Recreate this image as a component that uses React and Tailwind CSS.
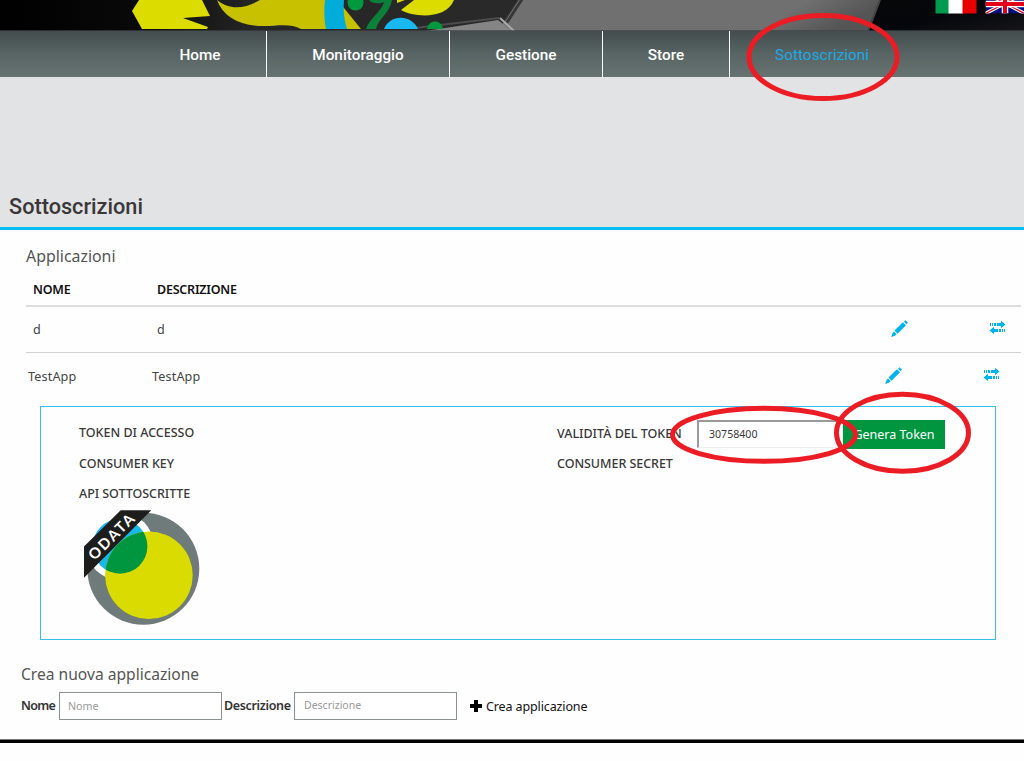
import React from "react";

const ubuntu = "font-['Noto_Sans',sans-serif]";

function Banner() {
  return (
    <svg className="block h-[31px] w-full" viewBox="0 0 1024 31" preserveAspectRatio="none">
      <defs>
        <linearGradient id="dark" x1="0" x2="1" y1="0" y2="0">
          <stop offset="0" stopColor="#000" />
          <stop offset="0.14" stopColor="#090909" />
          <stop offset="0.25" stopColor="#262626" />
          <stop offset="0.5" stopColor="#292929" />
        </linearGradient>
        <linearGradient id="night" x1="0" x2="1" y1="0" y2="1">
          <stop offset="0" stopColor="#080808" />
          <stop offset="0.5" stopColor="#03060b" />
          <stop offset="1" stopColor="#17161a" />
        </linearGradient>
        <linearGradient id="shade" x1="0" x2="1" y1="0" y2="0.15">
          <stop offset="0.8" stopColor="#707070" />
          <stop offset="1" stopColor="#555" />
        </linearGradient>
      </defs>
      <rect width="1024" height="31" fill="url(#dark)" />
      <polygon points="521,0 880,0 868,31 497,31" fill="url(#shade)" />
      <polygon points="425,31 498,20 512,31" fill="#858585" />
      <path d="M415 28 L499 18" stroke="#4c4c4c" strokeWidth="2" />
      <path d="M521 -1 L506 22" stroke="#373737" strokeWidth="5" />
      <path d="M520 -1 L505 22" stroke="#777" strokeWidth="1" />
      <path d="M500 18 L514 31" stroke="#aaa" strokeWidth="2" />
      <polygon points="880,0 1024,0 1024,31 868,31" fill="url(#night)" />
      <path d="M880 0 L868 31" stroke="#444" strokeWidth="2" />
      <path d="M139 0 L132 11 L142 29 H207 L208 27 L183 18 L210 16 L202 0Z" fill="#dddc00" />
      <path d="M217 0 C231 12 248 7 260 0 H336 L344 8 L361 29 H301 C291 23 277 26 264 26 C240 26 223 17 217 0Z" fill="#c7c100" />
      <path d="M325 0 H344 C343 10 344 20 347 29 H326 C324 18 324 8 325 0Z" fill="#00acd9" />
      <circle cx="355.500" cy="2.500" r="8" fill="#00983d" />
      <path d="M369 0 C372 4 380 4 384 2 C382 11 368 20 366 29 H376 C378 19 390 13 392 0Z" fill="#0a803a" />
      <path d="M384 29 C390 14 411 14 418 29Z" fill="#18b8f0" />
      <path d="M427 29 C428 19 442 19 443 29Z" fill="#00983d" />
      <path d="M397 0 V3 L405 0Z M414 0 L401 10 C415 18 447 19 454 0Z" fill="#dddc00" />
      <rect y="30" width="1024" height="1" fill="#404245" opacity="0.7" />
      <rect x="935.500" width="14" height="13.500" fill="#009a4e" />
      <rect x="948.500" width="14.500" height="13.500" fill="#fff" />
      <rect x="962.500" width="14" height="13.500" fill="#e80000" />
      <svg x="985.500" y="-7" width="39" height="20.500" viewBox="0 0 39 20.500">
        <rect width="39" height="20.500" fill="#00107a" />
        <path d="M0 0 L39 20.500 M0 20.500 L39 0" stroke="#fff" strokeWidth="3.500" />
        <path d="M0 0 L39 20.500 M0 20.500 L39 0" stroke="#e2001a" strokeWidth="1.200" />
        <path d="M0 11 H39 M19.500 0 V20.500" stroke="#fff" strokeWidth="6.500" />
        <path d="M0 11 H39 M19.500 0 V20.500" stroke="#e2001a" strokeWidth="4" />
      </svg>
    </svg>
  );
}

function Pencil() {
  return (
    <svg className="h-[17px] w-[17px]" viewBox="0 0 17 17" fill="#00b3ee">
      <path d="M13 1.800 L14.600 .3 L17 2.700 L15.400 4.200Z M11.900 2.200 L15 5.300 L6.600 13.700 L3.500 10.600Z M3 11.500 L5.600 14.200 L4 15.700 L.3 17 L1.500 13Z" />
    </svg>
  );
}

function Swap() {
  return (
    <svg className="h-[14px] w-[17px]" viewBox="0 0 17 14" fill="#00b3ee">
      <path d="M1 3h1v3H1z M3 3h1v3H3z M5 3h2v3H5z M8 3h4V.7l4.500 3.800-4.500 3.800V6H8z" />
      <path d="M.5 10.500l4.500-3.800V9h4v3H5v2z M10 9h2v3h-2z M13 9h1v3h-1z M15 9h1v3h-1z" />
    </svg>
  );
}

function ApiLogo() {
  return (
    <svg className="block h-[116px] w-[117px]" viewBox="84 510 117 116">
      <defs>
        <clipPath id="yellowClip">
          <circle cx="148.900" cy="575.300" r="43.800" />
        </clipPath>
      </defs>
      <circle cx="143.300" cy="568.700" r="56" fill="#6f7b7a" />
      <circle cx="120" cy="546.300" r="34" fill="#fff" />
      <circle cx="120" cy="546.300" r="27.400" fill="#1ab7ea" />
      <circle cx="148.900" cy="575.300" r="43.800" fill="#dadb00" />
      <circle cx="120" cy="546.300" r="27.400" fill="#00963f" clipPath="url(#yellowClip)" />
      <polygon points="84,546.500 120.700,510.300 151.300,510.300 84,577.700" fill="#1d1d1b" />
      <text
        transform="translate(115 540.600) rotate(-45)"
        textAnchor="middle"
        className="fill-white font-['Lato',sans-serif] text-[15px] font-bold"
        textLength="58"
      >
        ODATA
      </text>
    </svg>
  );
}

function NavItem({ className, children }) {
  return <li className={`flex items-center justify-center border-r border-white pt-[2px] ${className}`}>{children}</li>;
}

function Row({ children, pad, action, className }) {
  return (
    <div className={`flex text-[12.600px] text-[#444] ${className}`}>
      <span className={`w-[124px] shrink-0 box-content ${pad}`}>{children}</span>
      <span className="flex-1">{children}</span>
      <span className={`flex items-start ${action}`}>
        <Pencil />
        <span className="ml-[81px]">
          <Swap />
        </span>
      </span>
    </div>
  );
}

export default function App() {
  return (
    <div className={`relative h-[762px] w-[1024px] overflow-hidden bg-[#fefefe] ${ubuntu}`}>
      <Banner />
      <nav className="h-[46px] bg-linear-to-b from-[#434c4e] via-[#586564] to-[#677371]">
        <ul className="flex h-full pl-[134px] font-['Roboto',sans-serif] text-[15.300px] font-medium text-white">
          <NavItem className="w-[133px]">Home</NavItem>
          <NavItem className="w-[183px]">Monitoraggio</NavItem>
          <NavItem className="w-[153px]">Gestione</NavItem>
          <NavItem className="w-[127px]">Store</NavItem>
          <li className="flex items-center pt-[2px] pl-[45px] font-normal tracking-[0.050px] text-[#1aaae5]">Sottoscrizioni</li>
        </ul>
      </nav>

      <header className="flex h-[153px] items-end border-b-3 border-[#0abdf0] bg-[#e2e3e5] pb-[7px] pl-[9px]">
        <h1 className="font-['Roboto',sans-serif] text-[21.700px] leading-[26px] font-medium text-[#3b3739]">Sottoscrizioni</h1>
      </header>

      <main>
        <section className="pt-[15px] pr-[3px] pl-[26px]">
          <h2 className="h-[30px] text-[15.900px] leading-[22px] text-[#555]">Applicazioni</h2>
          <div className="flex h-[32px] border-b-2 border-[#ddd] pt-[5px] pl-[7px] text-[12.500px] leading-[20px] font-semibold text-[#111]">
            <span className="w-[124px] tracking-[-0.200px]">NOME</span>
            <span className="tracking-[-0.220px]">DESCRIZIONE</span>
          </div>
          <Row pad="pl-[7px]" action="pr-[15px] pt-[13px]" className="h-[46px] border-b border-[#d2d2d2] leading-[46px]">d</Row>
          <Row pad="pl-[2px]" action="pr-[21px] pt-[14px]" className="h-[53px] leading-[48px] tracking-[0.150px]">TestApp</Row>
        </section>

        <section className="ml-[40px] flex h-[234px] w-[956px] border border-[#36bfe9] pt-[12px] pl-[38px] text-[12.500px] font-medium text-[#383838]">
          <div className="w-[478px]">
            <p className="h-[31px] leading-[28px]">TOKEN DI ACCESSO</p>
            <p className="h-[30px] leading-[28px]">CONSUMER KEY</p>
            <p className="h-[30px] leading-[28px] tracking-[-0.050px]">API SOTTOSCRITTE</p>
            <div className="pl-[5px]">
              <ApiLogo />
            </div>
          </div>
          <div>
            <div className="flex h-[31px]">
              <label className="w-[140px] leading-[29px]">VALIDITÀ DEL TOKEN</label>
              <span className="mt-[1px] flex h-[28px] w-[146px] items-center border border-t-2 border-l-2 border-t-[#999] border-l-[#999] border-r-[#eee] border-b-[#eee] bg-white pl-[10px] text-[10.600px] font-normal">
                30758400
              </span>
              <button className="mt-[1px] h-[29px] w-[102px] bg-[#009640] pt-[2px] text-[12.500px] font-normal whitespace-nowrap text-white">Genera Token</button>
            </div>
            <p className="leading-[28px] tracking-[-0.050px]">CONSUMER SECRET</p>
          </div>
        </section>

        <section className="pt-[23px] pl-[21px]">
          <h2 className="h-[29px] text-[15.600px] leading-[22px] text-[#555]">Crea nuova applicazione</h2>
          <div className="flex h-[28px] items-center text-[12.500px] text-[#333]">
            <label className="w-[38px] font-semibold tracking-[-0.700px]">Nome</label>
            <span className="flex h-[28px] w-[163px] items-center border border-[#8a9291] bg-white pl-[8px] text-[10.700px] text-[#999]">Nome</span>
            <label className="w-[72px] pl-[2px] font-semibold tracking-[-0.350px]">Descrizione</label>
            <span className="flex h-[28px] w-[163px] items-center border border-[#8a9291] bg-white pl-[9px] text-[10.500px] text-[#999]">Descrizione</span>
            <svg className="ml-[13px] h-[12px] w-[12px]" viewBox="0 0 12 12" fill="#000">
              <path d="M4 0h4v4h4v4H8v4H4V8H0V4h4z" />
            </svg>
            <span className="ml-[4px] pt-[2px] tracking-[-0.120px] text-[#111]">Crea applicazione</span>
          </div>
        </section>
        <div className="mt-[19px] h-[4px] border-t border-[#777] bg-black" />
      </main>

      <svg className="pointer-events-none absolute inset-0 h-full w-full" fill="none" stroke="#ec1c24" strokeWidth="5" viewBox="0 0 1024 762">
        <ellipse cx="823" cy="57" rx="74" ry="41.500" />
        <ellipse cx="764" cy="434.800" rx="91.500" ry="26.500" />
        <ellipse cx="902.500" cy="432.800" rx="66" ry="38.500" />
      </svg>
    </div>
  );
}
